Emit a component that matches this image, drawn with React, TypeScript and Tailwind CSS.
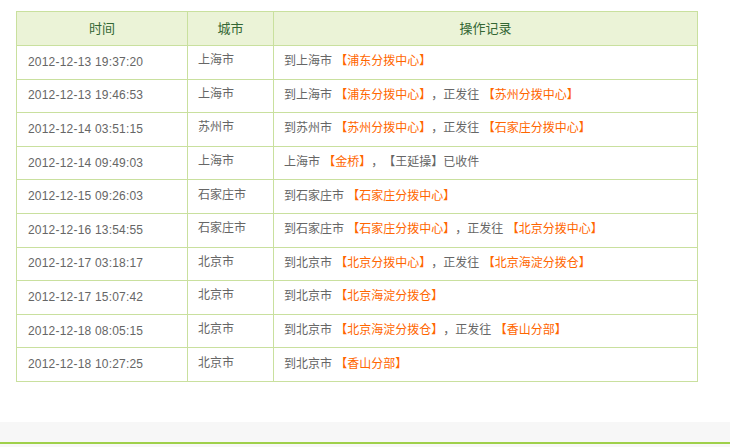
const rows: { time: string; city: string; action: (string | { hl: string })[] }[] = [
  { time: '2012-12-13 19:37:20', city: '上海市', action: ['到上海市 ', { hl: '【浦东分拨中心】' }] },
  { time: '2012-12-13 19:46:53', city: '上海市', action: ['到上海市 ', { hl: '【浦东分拨中心】' }, '，正发往 ', { hl: '【苏州分拨中心】' }] },
  { time: '2012-12-14 03:51:15', city: '苏州市', action: ['到苏州市 ', { hl: '【苏州分拨中心】' }, '，正发往 ', { hl: '【石家庄分拨中心】' }] },
  { time: '2012-12-14 09:49:03', city: '上海市', action: ['上海市 ', { hl: '【金桥】' }, '，【王延操】已收件'] },
  { time: '2012-12-15 09:26:03', city: '石家庄市', action: ['到石家庄市 ', { hl: '【石家庄分拨中心】' }] },
  { time: '2012-12-16 13:54:55', city: '石家庄市', action: ['到石家庄市 ', { hl: '【石家庄分拨中心】' }, '，正发往 ', { hl: '【北京分拨中心】' }] },
  { time: '2012-12-17 03:18:17', city: '北京市', action: ['到北京市 ', { hl: '【北京分拨中心】' }, '，正发往 ', { hl: '【北京海淀分拨仓】' }] },
  { time: '2012-12-17 15:07:42', city: '北京市', action: ['到北京市 ', { hl: '【北京海淀分拨仓】' }] },
  { time: '2012-12-18 08:05:15', city: '北京市', action: ['到北京市 ', { hl: '【北京海淀分拨仓】' }, '，正发往 ', { hl: '【香山分部】' }] },
  { time: '2012-12-18 10:27:25', city: '北京市', action: ['到北京市 ', { hl: '【香山分部】' }] },
];

const cjk = "font-['Liberation_Sans','Noto_Sans_CJK_SC',sans-serif]";

export default function App() {
  return (
    <div className={`w-[730px] h-[447px] bg-white overflow-hidden flex flex-col ${cjk} [text-spacing-trim:space-all]`}>
      <div className="pt-[11px] pl-[16px] h-[422px]">
        <table className="w-[682px] border-collapse text-[12px] text-[#666666]">
          <thead>
            <tr className="h-[34px] bg-[#ebf3d7] text-[#336633]">
              <th className="w-[171px] border border-[#c9e09e] font-normal text-[13px]">时间</th>
              <th className="w-[86px] border border-[#c9e09e] font-normal text-[13px]">城市</th>
              <th className="border border-[#c9e09e] font-normal text-[13px]">操作记录</th>
            </tr>
          </thead>
          <tbody>
            {rows.map((r) => (
              <tr key={r.time} className="h-[33.6px]">
                <td className="border border-[#c9e09e] pl-[11px] pb-[1px] tracking-[0.2px]">{r.time}</td>
                <td className="border border-[#c9e09e] pl-[10px] pb-[4px]">{r.city}</td>
                <td className="border border-[#c9e09e] pl-[10px] pb-[2px] whitespace-nowrap">
                  {r.action.map((a, i) =>
                    typeof a === 'string' ? (
                      <span key={i}>{a}</span>
                    ) : (
                      <span key={i} className="text-[#ff6600]">{a.hl}</span>
                    ),
                  )}
                </td>
              </tr>
            ))}
          </tbody>
        </table>
      </div>
      <div className="h-[20px] bg-[#f7f7f7]" />
      <div className="h-[2px] bg-[#9fd04a]" />
      <div className="flex-1 bg-[#f7f7f7]" />
    </div>
  );
}
